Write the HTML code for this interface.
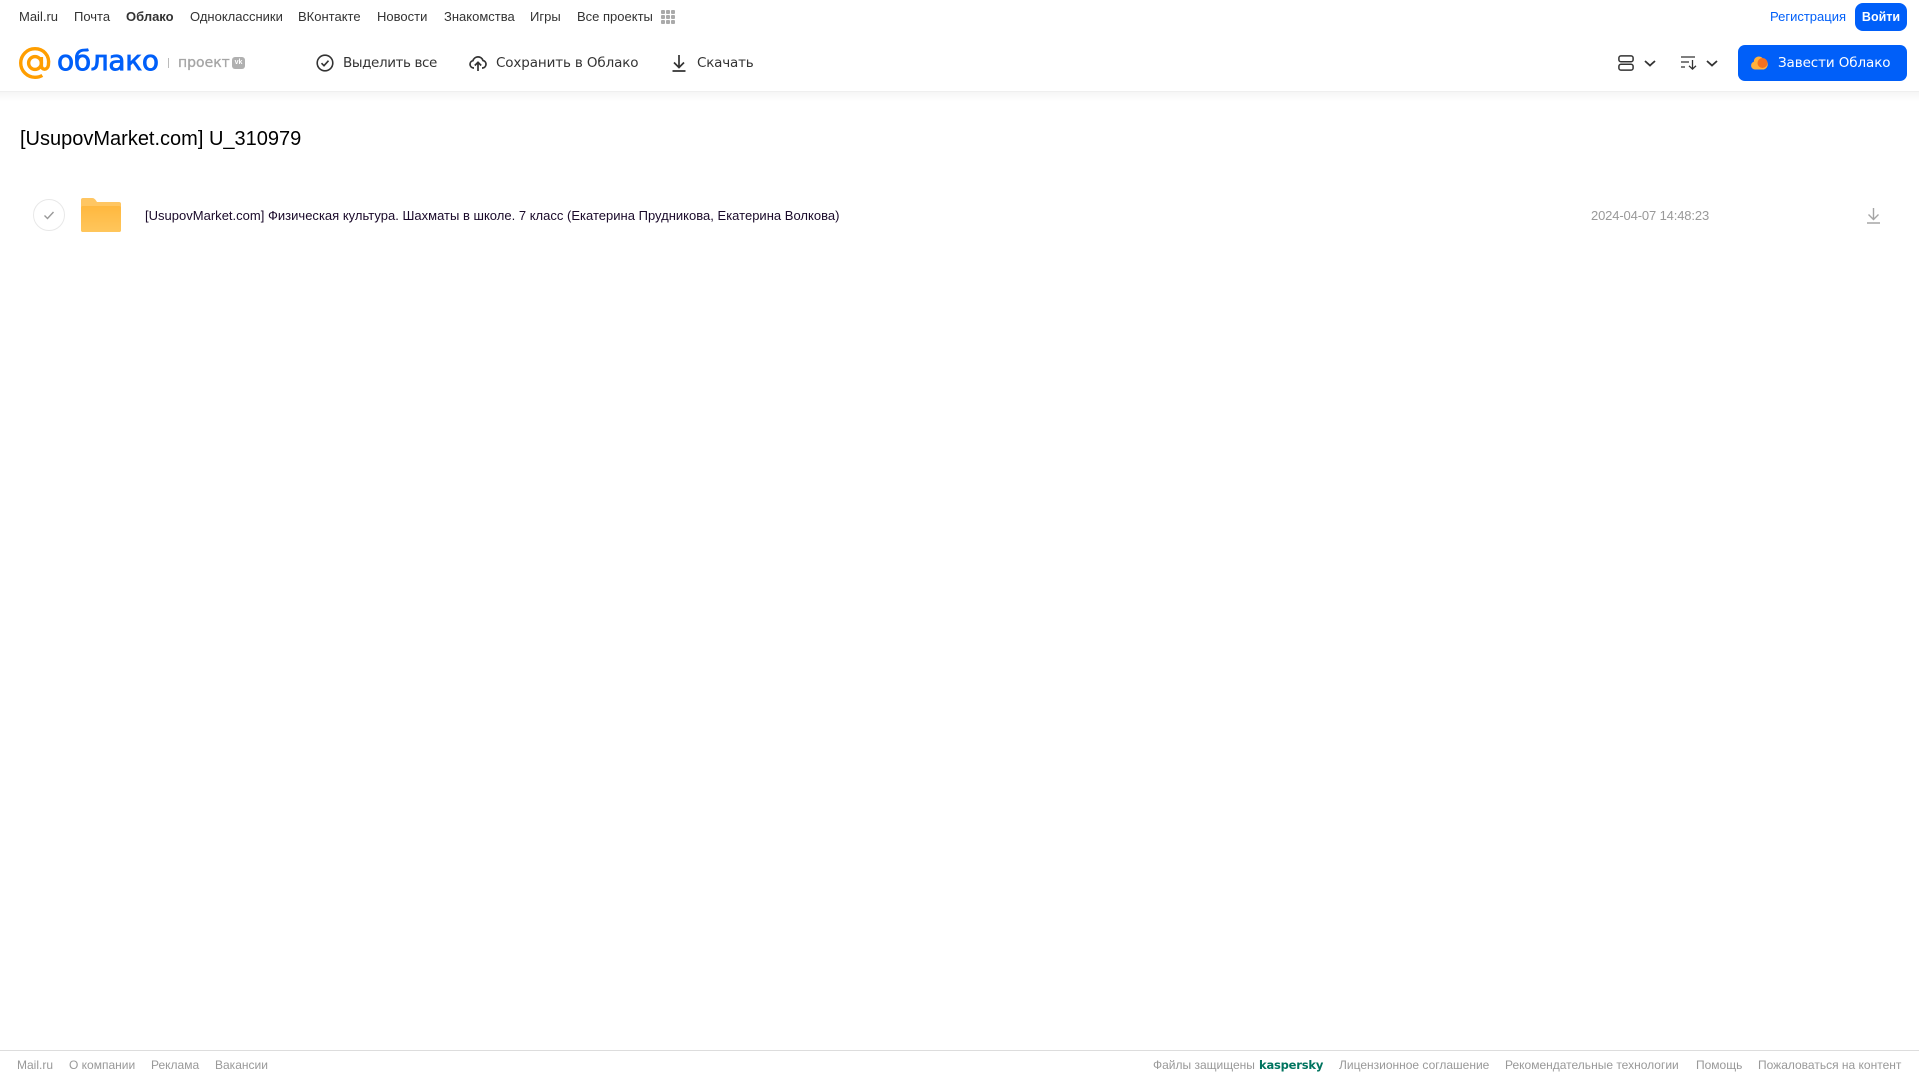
<!DOCTYPE html>
<html lang="ru"><head><meta charset="utf-8"><title>Облако</title>
<style>
html,body{margin:0;padding:0;background:#fff;width:1919px;height:1079px;overflow:hidden;font-family:"Liberation Sans",sans-serif}
.t{position:absolute;white-space:nowrap;line-height:16px}
.n{top:9px;font-size:13px;color:#333}
.h{top:55px;color:#333;font-family:"DejaVu Sans",sans-serif;letter-spacing:-.2px;font-size:13.5px}
.f{top:1057px;font-size:12px;color:#999}
svg{position:absolute;overflow:visible}
</style></head><body>
<div class="t n" style="left:19px">Mail.ru</div>
<div class="t n" style="left:74px">Почта</div>
<div class="t n" style="left:126px;font-weight:bold">Облако</div>
<div class="t n" style="left:190px">Одноклассники</div>
<div class="t n" style="left:298px">ВКонтакте</div>
<div class="t n" style="left:377px">Новости</div>
<div class="t n" style="left:444px">Знакомства</div>
<div class="t n" style="left:530px">Игры</div>
<div class="t n" style="left:577px">Все проекты</div>
<svg style="left:661px;top:10px" width="14" height="14" fill="#aaa"><rect x="0" y="0" width="4" height="4" rx="1"/><rect x="5" y="0" width="4" height="4" rx="1"/><rect x="10" y="0" width="4" height="4" rx="1"/><rect x="0" y="5" width="4" height="4" rx="1"/><rect x="5" y="5" width="4" height="4" rx="1"/><rect x="10" y="5" width="4" height="4" rx="1"/><rect x="0" y="10" width="4" height="4" rx="1"/><rect x="5" y="10" width="4" height="4" rx="1"/><rect x="10" y="10" width="4" height="4" rx="1"/></svg>
<div class="t n" style="left:1770px;color:#005ff9">Регистрация</div>
<div style="position:absolute;left:1855px;top:3px;width:52px;height:28px;background:#005ff9;border-radius:8px;color:#fff;font-size:12.5px;font-weight:bold;line-height:28px;text-align:center">Войти</div>

<svg style="left:19px;top:47px" width="33" height="33" fill="none" stroke="#ff9e00" stroke-width="3.4"><circle cx="16" cy="16" r="6.4"/><path d="M22.400 10v8.500c0 5 6.300 5 7-.5C31 8 24 1.700 16 1.700A14.300 14.300 0 0 0 16 30.300c3 0 5.300-.7 7.300-1.900"/></svg>
<div class="t" style="left:57px;top:44px;line-height:34px;font-size:28px;color:#005ff9;font-family:'DejaVu Sans',sans-serif;letter-spacing:-.3px;-webkit-text-stroke:.8px #005ff9">облако</div>
<div style="position:absolute;left:168px;top:58px;width:1px;height:10px;background:#bbb"></div>
<div class="t" style="left:178px;top:55px;font-size:14px;color:#a5a5a5;font-family:'DejaVu Sans',sans-serif;letter-spacing:0;-webkit-text-stroke:.3px #a5a5a5">проект</div>
<div style="position:absolute;left:232px;top:57px;width:13px;height:12px;background:#b0b0b0;border-radius:3px;color:#fff;font-size:7px;font-weight:bold;line-height:12px;text-align:center">vk</div>

<svg style="left:316px;top:54px" width="18" height="18" fill="none" stroke="#333" stroke-width="1.600"><circle cx="9" cy="9" r="7.800"/><path d="M5.500 9.200l2.500 2.500 4.500-5"/></svg>
<div class="t h" style="left:343px;letter-spacing:-.4px">Выделить все</div>
<svg style="left:469px;top:54px" width="18" height="18" fill="none" stroke="#333" stroke-width="1.700"><path d="M5 14H4.500A3.700 3.700 0 0 1 3.900 6.700 5.300 5.300 0 0 1 14 6.500 3.800 3.800 0 0 1 13.500 14H13M9 17V8.500M5.800 11.500 9 8.300l3.200 3.200"/></svg>
<div class="t h" style="left:496px;letter-spacing:-.13px">Сохранить в Облако</div>
<svg style="left:672px;top:54px" width="15" height="18" fill="none" stroke="#333" stroke-width="1.700"><path d="M7 1v12M2 8.500l5 5 5-5M.5 17h13"/></svg>
<div class="t h" style="left:697px">Скачать</div>

<svg style="left:1618px;top:55px" width="16" height="16" fill="none" stroke="#333" stroke-width="1.500"><rect x=".9" y=".9" width="14.200" height="5.800" rx="2"/><rect x=".9" y="9.300" width="14.200" height="5.800" rx="2"/></svg>
<svg style="left:1644px;top:60px" width="12" height="7" fill="none" stroke="#333" stroke-width="1.800"><path d="M1 1l5 4.500L11 1"/></svg>
<svg style="left:1681px;top:56px" width="16" height="14" fill="none" stroke="#333" stroke-width="1.300"><path d="M0 1h14M0 6h8M0 11h4M11.500 4v9M8 9.800l3.500 3.300L15 9.800"/></svg>
<svg style="left:1706px;top:60px" width="12" height="7" fill="none" stroke="#333" stroke-width="1.800"><path d="M1 1l5 4.500L11 1"/></svg>
<div style="position:absolute;left:1738px;top:45px;width:169px;height:36px;background:#005ff9;border-radius:7px"></div>
<svg style="left:1750px;top:54px" width="19" height="16"><path d="M5 15.500A4 4 0 0 1 3.800 7.700 5 5 0 0 1 13 4.800 5.500 5.500 0 0 1 14 15.500Z" fill="#ffb13c"/><circle cx="12.500" cy="9" r="5" fill="#f4711f"/></svg>
<div class="t h" style="left:1778px;color:#fff;letter-spacing:-.1px">Завести Облако</div>

<div style="position:absolute;left:0;top:91px;width:1919px;height:1px;background:#efefef"></div>
<div style="position:absolute;left:0;top:92px;width:1919px;height:10px;background:linear-gradient(#f5f5f5,#fff)"></div>

<div class="t" style="left:20px;top:125px;line-height:28px;font-size:20px;color:#000">[UsupovMarket.com] U_310979</div>

<svg style="left:33px;top:199px" width="32" height="32" fill="none"><circle cx="16" cy="16" r="15.500" stroke="#e8e8e8"/><path d="M11.500 16.500l3 3 6-6.500" stroke="#999" stroke-width="1.400"/></svg>
<svg style="left:81px;top:198px" width="40" height="34"><defs><linearGradient id="g" x1="0" y1="0" x2="0" y2="1"><stop offset="0" stop-color="#ffb83f"/><stop offset="1" stop-color="#ffc65c"/></linearGradient></defs><path d="M2 0H11C13 0 14 1 15 2.500L16 4H38A2 2 0 0 1 40 6V32A2 2 0 0 1 38 34H2A2 2 0 0 1 0 32V2A2 2 0 0 1 2 0Z" fill="#ffc662"/><rect y="8" width="40" height="26" rx="2" fill="url(#g)"/></svg>
<div class="t" style="left:145px;top:208px;font-size:13px;color:#1a0a2a;letter-spacing:.01px">[UsupovMarket.com] Физическая культура. Шахматы в школе. 7 класс (Екатерина Прудникова, Екатерина Волкова)</div>
<div class="t" style="left:1591px;top:208px;font-size:13px;color:#999;letter-spacing:-.14px">2024-04-07 14:48:23</div>
<svg style="left:1867px;top:207px" width="13" height="17" fill="none" stroke="#a5a5a5" stroke-width="1.400"><path d="M6.500 1v11M1.500 7.500l5 5 5-5M0 16h13"/></svg>

<div style="position:absolute;left:0;top:1050px;width:1919px;height:1px;background:#ddd"></div>
<div class="t f" style="left:17px">Mail.ru</div>
<div class="t f" style="left:69px">О компании</div>
<div class="t f" style="left:151px">Реклама</div>
<div class="t f" style="left:215px">Вакансии</div>
<div class="t f" style="left:1153px">Файлы защищены</div>
<div class="t f" style="left:1259px;font-weight:bold;color:#00745f;font-family:'DejaVu Sans',sans-serif;font-size:11.500px;letter-spacing:-.2px">kaspersky</div>
<div class="t f" style="left:1339px">Лицензионное соглашение</div>
<div class="t f" style="left:1505px">Рекомендательные технологии</div>
<div class="t f" style="left:1696px">Помощь</div>
<div class="t f" style="left:1758px">Пожаловаться на контент</div>
</body></html>
